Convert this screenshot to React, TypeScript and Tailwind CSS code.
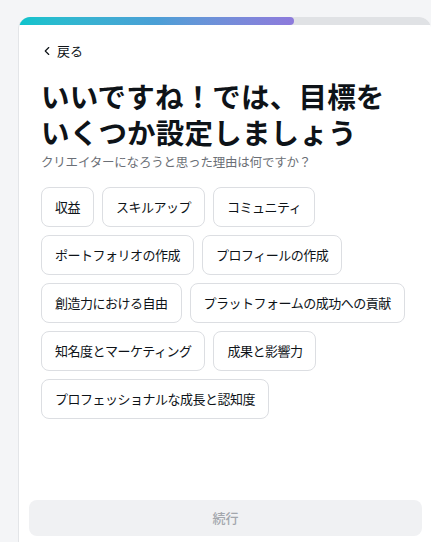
import { ChevronLeft } from "lucide-react";

const goals = [
  ["収益", "スキルアップ", "コミュニティ"],
  ["ポートフォリオの作成", "プロフィールの作成"],
  ["創造力における自由", "プラットフォームの成功への貢献"],
  ["知名度とマーケティング", "成果と影響力"],
  ["プロフェッショナルな成長と認知度"],
];

export default function App() {
  return (
    <div
      className="flex h-[542px] flex-col overflow-hidden bg-[#f4f5f7] pl-[18px] pt-[17px]"
      style={{ fontFamily: '"Noto Sans CJK JP", "Noto Sans", sans-serif' }}
    >
      <div className="flex flex-1 flex-col overflow-hidden rounded-tl-[12px] rounded-tr-[12px] border-l border-[#e3e5e8] bg-white">
        <div className="h-2 w-full bg-[#e0e2e5]">
          <div className="h-2 w-[275px] rounded-r-full bg-gradient-to-r from-[#0bc4cc] via-[#4a9fd6] to-[#8d7adc]" />
        </div>

        <div className="flex flex-1 flex-col px-[22px] pt-[16px]">
          <button className="flex items-center gap-[3px] self-start text-[13px] leading-5 text-[#0e1318]">
            <ChevronLeft size={14} strokeWidth={2} className="-ml-[1px]" />
            <span>戻る</span>
          </button>

          <h1 className="mt-[17px] text-[28.5px] font-bold leading-[36px] tracking-[0.2px] text-[#0e1318]">
            いいですね！では、目標を
            <br />
            いくつか設定しましょう
          </h1>
          <p className="mt-[2px] text-[12.5px] leading-5 tracking-[-0.2px] text-[#6b6f76]">
            クリエイターになろうと思った理由は何ですか？
          </p>

          <div className="mt-[15px] flex flex-col gap-2">
            {goals.map((row, i) => (
              <div key={i} className="flex gap-2">
                {row.map((g) => (
                  <button
                    key={g}
                    className="flex h-10 items-center whitespace-nowrap rounded-[8px] border border-[#dcdee2] bg-white px-[13px] text-[13px] tracking-[-0.5px] text-[#0e1318]"
                  >
                    {g}
                  </button>
                ))}
              </div>
            ))}
          </div>

          <div className="flex-1" />
        </div>

        <div className="pb-[6px] pl-[10px] pr-[9px]">
          <button className="flex h-9 w-full items-center justify-center rounded-[8px] bg-[#f0f1f3] text-[13px] font-medium text-[#a3a7ad]">
            続行
          </button>
        </div>
      </div>
    </div>
  );
}
